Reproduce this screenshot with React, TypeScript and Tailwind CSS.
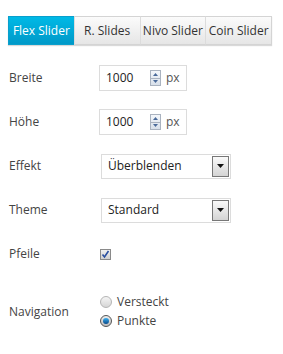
import React from "react";

const tabs = ["Flex Slider", "R. Slides", "Nivo Slider", "Coin Slider"];

function Spinner() {
  return (
    <div className="flex h-[16px] w-[11px] flex-col border border-[#aab3c0] bg-gradient-to-b from-[#f4f7fb] to-[#d8e0ea]">
      <div className="flex flex-1 items-center justify-center border-b border-[#aab3c0]">
        <svg width="5" height="3" viewBox="0 0 5 3">
          <path d="M0 3 L2.5 0 L5 3 Z" fill="#4a6a9a" />
        </svg>
      </div>
      <div className="flex flex-1 items-center justify-center">
        <svg width="5" height="3" viewBox="0 0 5 3">
          <path d="M0 0 L2.5 3 L5 0 Z" fill="#4a6a9a" />
        </svg>
      </div>
    </div>
  );
}

function NumberField({ value }: { value: string }) {
  return (
    <div className="flex h-[26px] w-[88px] items-center border border-[#dcdcdc] bg-white pl-[6px] text-[#222]">
      <span className="w-[44px]">{value}</span>
      <Spinner />
      <span className="ml-[5px] text-[#555]">px</span>
    </div>
  );
}

function SelectField({ value }: { value: string }) {
  return (
    <div className="ml-[2px] flex h-[25px] w-[130px] items-center justify-between border border-[#dcdcdc] bg-white pl-[6px] pr-[1px] text-[#222]">
      <span>{value}</span>
      <div className="flex h-[21px] w-[17px] items-center justify-center border border-[#777] bg-gradient-to-b from-[#fafafa] to-[#d4d4d4]">
        <svg width="7" height="4" viewBox="0 0 7 4">
          <path d="M0 0 L7 0 L3.5 4 Z" fill="#111" />
        </svg>
      </div>
    </div>
  );
}

function Row({ label, children, tall }: { label: string; children: React.ReactNode; tall?: boolean }) {
  return (
    <div className={`flex items-center ${tall ? "h-[72px]" : "h-[44px]"}`}>
      <div className="w-[91px] pl-[1px] text-[#444]">{label}</div>
      {children}
    </div>
  );
}

function Radio({ checked, label }: { checked?: boolean; label: string }) {
  return (
    <div className="flex h-[19px] items-center gap-[5px]">
      <div
        className={`ml-[1px] flex h-[12px] w-[12px] items-center justify-center rounded-full border ${
          checked ? "border-[#555] bg-gradient-to-b from-[#eee] to-[#bbb]" : "border-[#b5b5b5] bg-gradient-to-b from-[#f5f5f5] to-[#d6d6d6]"
        }`}
      >
        {checked && <div className="h-[6px] w-[6px] rounded-full bg-gradient-to-b from-[#3ab0f0] to-[#0a4a8a]" />}
      </div>
      <span className="text-[#444]">{label}</span>
    </div>
  );
}

export default function App() {
  return (
    <div className="h-[354px] w-[283px] bg-white px-2 pt-4 font-['Open_Sans',sans-serif] text-[12px]">
      <div className="flex h-[29px] w-[264px] shadow-[0_1px_1px_rgba(0,0,0,0.15)]">
        {tabs.map((t, i) => (
          <div
            key={t}
            className={`flex flex-1 items-center justify-center border ${
              i === 0
                ? "border-[#0a9fcc] bg-gradient-to-b from-[#00b9e6] to-[#0099c8] text-white"
                : "border-[#d4d4d4] border-l-[#dcdcdc] bg-gradient-to-b from-[#fbfbfb] to-[#e6e6e6] text-[#333]"
            } ${i > 0 ? "-ml-px" : ""}`}
          >
            {t}
          </div>
        ))}
      </div>
      <div className="mt-[11px]">
        <Row label="Breite">
          <NumberField value="1000" />
        </Row>
        <Row label="Höhe">
          <NumberField value="1000" />
        </Row>
        <Row label="Effekt">
          <SelectField value="Überblenden" />
        </Row>
        <Row label="Theme">
          <SelectField value="Standard" />
        </Row>
        <Row label="Pfeile">
          <div className="ml-[1px] flex h-[11px] w-[11px] items-center justify-center border border-[#8a8a8a] bg-gradient-to-b from-[#f0f0f0] to-[#d0d0d0]">
            <svg width="9" height="9" viewBox="0 0 9 9">
              <path d="M1.5 4.5 L3.5 7 L7.5 1" stroke="#2a4fa0" strokeWidth="1.6" fill="none" />
            </svg>
          </div>
        </Row>
        <Row label="Navigation" tall>
          <div className="-mt-[1px] flex flex-col">
            <Radio label="Versteckt" />
            <Radio label="Punkte" checked />
          </div>
        </Row>
      </div>
    </div>
  );
}
